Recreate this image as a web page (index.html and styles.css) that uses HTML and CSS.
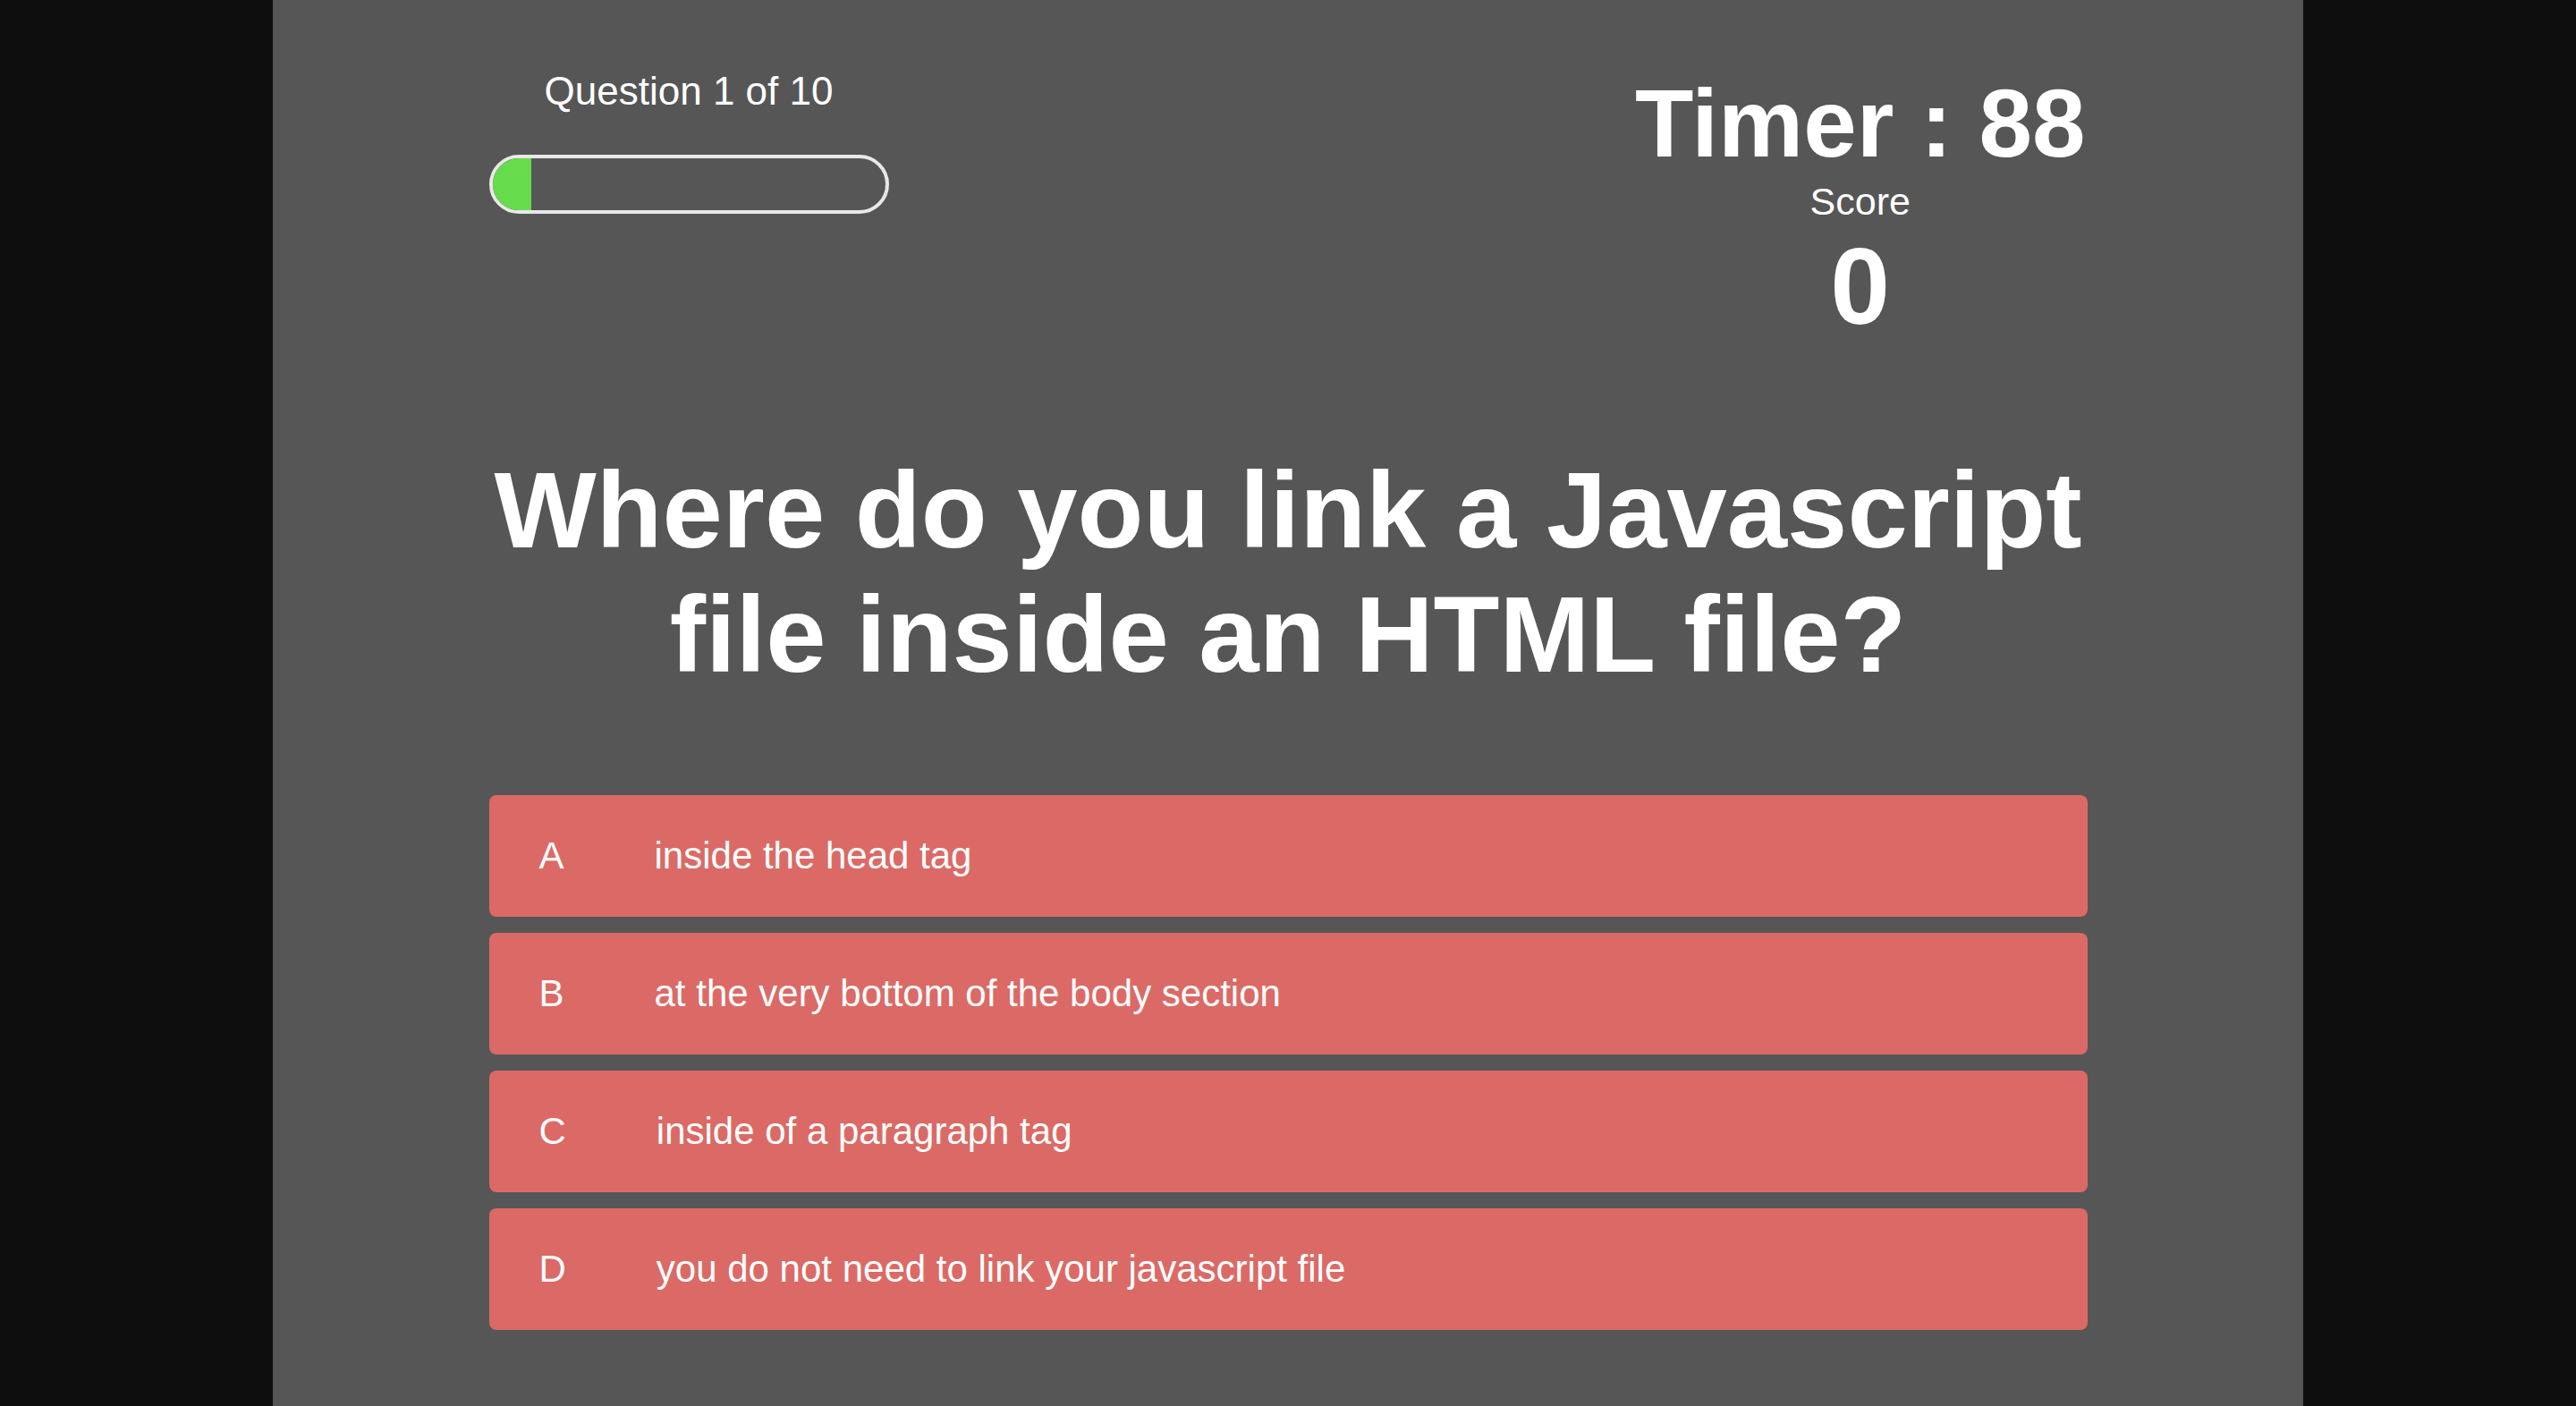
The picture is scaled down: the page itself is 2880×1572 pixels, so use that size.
FILE: index.html
```html
<!DOCTYPE html>
<html lang="en">
<head>
<meta charset="utf-8">
<title>Quiz</title>
<link rel="stylesheet" href="styles.css">
</head>
<body>
<main class="quiz">
  <div class="content">
    <header class="hud">
      <div class="progress-col">
        <p class="progress-label">Question 1 of 10</p>
        <div class="progress-bar"><div class="progress-fill" style="width: 10%"></div></div>
      </div>
      <div class="score-col">
        <p class="timer">Timer : 88</p>
        <p class="score-label">Score</p>
        <p class="score-value">0</p>
      </div>
    </header>
    <h1 class="question">Where do you link a Javascript<br>file inside an HTML file?</h1>
    <div class="answers">
      <button class="answer"><span class="letter">A</span><span class="answer-text">inside the head tag</span></button>
      <button class="answer"><span class="letter">B</span><span class="answer-text">at the very bottom of the body section</span></button>
      <button class="answer"><span class="letter">C</span><span class="answer-text">inside of a paragraph tag</span></button>
      <button class="answer"><span class="letter">D</span><span class="answer-text">you do not need to link your javascript file</span></button>
    </div>
  </div>
</main>
</body>
</html>
```

FILE: styles.css
```css
* { box-sizing: border-box; }

html, body {
  margin: 0;
  padding: 0;
  background: #0e0e0e;
  font-family: "Liberation Sans", Arial, Helvetica, sans-serif;
  color: #ffffff;
}

.quiz {
  width: 2270px;
  min-height: 100vh;
  margin: 0 auto;
  background: #565656;
  padding-top: 77px;
}

.content {
  width: 1787px;
  margin: 0 auto;
}

.hud {
  display: flex;
  justify-content: space-between;
  align-items: flex-start;
}

.progress-col {
  width: 447px;
  display: flex;
  flex-direction: column;
  align-items: center;
}

.progress-label {
  margin: 0;
  font-size: 44px;
  line-height: 50px;
}

.progress-bar {
  margin-top: 46px;
  width: 447px;
  height: 66px;
  border: 4px solid #e8e8e8;
  border-radius: 33px;
  overflow: hidden;
}

.progress-fill {
  height: 100%;
  background: #66dc4c;
}

.score-col {
  display: flex;
  flex-direction: column;
  align-items: center;
  padding-right: 2px;
}

.timer {
  margin: 0;
  font-size: 107px;
  line-height: 123px;
  font-weight: 700;
}

.score-label {
  margin: 0;
  font-size: 43px;
  line-height: 50px;
}

.score-value {
  margin: 1px 0 0;
  font-size: 120px;
  line-height: 138px;
  font-weight: 700;
}

.question {
  margin: 112px 0 0;
  text-align: center;
  font-size: 121px;
  line-height: 139px;
  font-weight: 700;
}

.answers {
  margin-top: 110px;
  display: flex;
  flex-direction: column;
  gap: 18px;
}

.answer {
  display: flex;
  align-items: center;
  width: 100%;
  height: 136px;
  padding: 0 0 0 56px;
  border: none;
  border-radius: 8px;
  background: #db6a66;
  color: #ffffff;
  font-family: inherit;
  font-size: 42px;
  text-align: left;
  cursor: pointer;
}

.letter {
  display: inline-block;
  margin-right: 101px;
}
```
